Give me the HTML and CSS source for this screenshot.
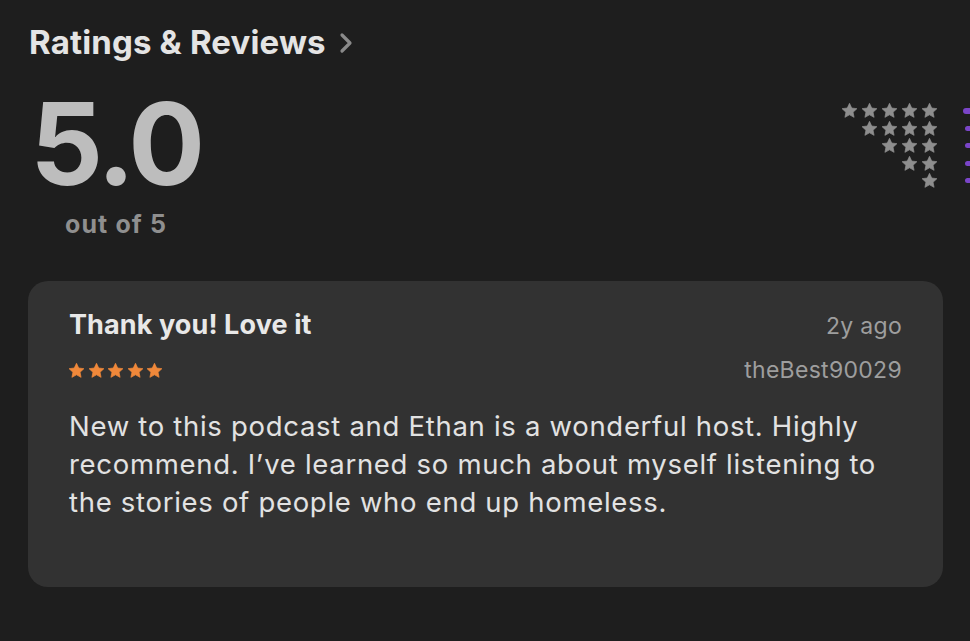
FILE: index.html
```html
<!DOCTYPE html>
<html lang="en">
<head>
  <meta charset="UTF-8" />
  <title>Ratings &amp; Reviews</title>
  <link rel="stylesheet" href="styles.css">
</head>
<body>

  <svg class="defs" width="0" height="0">
    <defs>
      <path id="star" d="M12 1.8 L15.12 8.51 L22.46 9.4 L17.04 14.44 L18.47 21.7 L12 18.1 L5.53 21.7 L6.96 14.44 L1.54 9.4 L8.88 8.51 Z"/>
    </defs>
  </svg>

  <header class="section-head">
    <h1>Ratings &amp; Reviews</h1>
    <svg class="chevron" width="16" height="24" viewBox="0 0 16 24">
      <path d="M4 4 L12 12 L4 20" fill="none" stroke="#8a8a8a" stroke-width="3.2" stroke-linecap="round" stroke-linejoin="round"/>
    </svg>
  </header>

  <!-- summary -->
  <div class="summary">
    <div class="score">
      <div class="score-num">5.0</div>
      <div class="score-sub">out of 5</div>
    </div>

    <div class="histogram">
      <div class="hist-row">
        <span class="stars">
          <svg viewBox="0 0 24 24"><use href="#star"/></svg>
          <svg viewBox="0 0 24 24"><use href="#star"/></svg>
          <svg viewBox="0 0 24 24"><use href="#star"/></svg>
          <svg viewBox="0 0 24 24"><use href="#star"/></svg>
          <svg viewBox="0 0 24 24"><use href="#star"/></svg>
        </span>
        <span class="bar bar-full"></span>
      </div>
      <div class="hist-row">
        <span class="stars">
          <svg viewBox="0 0 24 24"><use href="#star"/></svg>
          <svg viewBox="0 0 24 24"><use href="#star"/></svg>
          <svg viewBox="0 0 24 24"><use href="#star"/></svg>
          <svg viewBox="0 0 24 24"><use href="#star"/></svg>
        </span>
        <span class="bar"></span>
      </div>
      <div class="hist-row">
        <span class="stars">
          <svg viewBox="0 0 24 24"><use href="#star"/></svg>
          <svg viewBox="0 0 24 24"><use href="#star"/></svg>
          <svg viewBox="0 0 24 24"><use href="#star"/></svg>
        </span>
        <span class="bar"></span>
      </div>
      <div class="hist-row">
        <span class="stars">
          <svg viewBox="0 0 24 24"><use href="#star"/></svg>
          <svg viewBox="0 0 24 24"><use href="#star"/></svg>
        </span>
        <span class="bar"></span>
      </div>
      <div class="hist-row">
        <span class="stars">
          <svg viewBox="0 0 24 24"><use href="#star"/></svg>
        </span>
        <span class="bar"></span>
      </div>
    </div>
  </div>

  <!-- review card -->
  <article class="review">
    <div class="review-top">
      <h2>Thank you! Love it</h2>
      <span class="meta">2y ago</span>
    </div>
    <div class="review-sub">
      <span class="rating">
        <svg viewBox="0 0 24 24"><use href="#star"/></svg>
        <svg viewBox="0 0 24 24"><use href="#star"/></svg>
        <svg viewBox="0 0 24 24"><use href="#star"/></svg>
        <svg viewBox="0 0 24 24"><use href="#star"/></svg>
        <svg viewBox="0 0 24 24"><use href="#star"/></svg>
      </span>
      <span class="meta">theBest90029</span>
    </div>
    <p class="review-body">New to this podcast and Ethan is a wonderful host. Highly recommend. I’ve learned so much about myself listening to the stories of people who end up homeless.</p>
  </article>

</body>
</html>
```

FILE: styles.css
```css
body {
  font-family: Inter, "Noto Sans", sans-serif;
  background-color: #1e1e1e;
  margin: 0;
  padding: 22px 0 0 28px;
  overflow: hidden;
  height: 619px;
}

.defs {
  position: absolute;
}

.section-head {
  display: flex;
  align-items: center;
  gap: 12px;
  padding-left: 1px;
}

h1 {
  margin: 0;
  font-size: 33px;
  font-weight: 700;
  color: #e4e4e4;
  letter-spacing: 0.15px;
  line-height: 40px;
}

.chevron {
  margin-top: 2px;
}

.summary {
  display: flex;
  justify-content: space-between;
  align-items: flex-start;
  height: 219px;
}

.score {
  display: flex;
  flex-direction: column;
  align-items: center;
  width: 176px;
}

.score-num {
  font-size: 114px;
  font-weight: 700;
  color: #bdbdbd;
  line-height: 1;
  letter-spacing: -3.5px;
  margin-top: 25px;
}

.score-sub {
  font-size: 25px;
  font-weight: 700;
  color: #8f8f8f;
  letter-spacing: 1.1px;
  margin-top: 8px;
}

.histogram {
  display: flex;
  flex-direction: column;
  margin-top: 40px;
  margin-right: -75px;
}

.hist-row {
  display: flex;
  align-items: center;
  height: 17.5px;
}

.stars {
  display: flex;
  justify-content: flex-end;
  gap: 3px;
  width: 98px;
  fill: #8e8e8e;
  stroke: #8e8e8e;
  stroke-width: 1;
  stroke-linejoin: round;
}

.stars svg {
  width: 17px;
  height: 17px;
  flex: none;
}

.bar {
  width: 80px;
  height: 5px;
  margin-left: 27px;
  border-radius: 3px;
  background-color: #7a45c8;
}

.bar-full {
  height: 6px;
  margin-left: 25px;
}

.review {
  width: 833px;
  height: 268px;
  padding: 27px 41px 11px 41px;
  background-color: #323232;
  border-radius: 20px;
}

.review-top, .review-sub {
  display: flex;
  justify-content: space-between;
  align-items: baseline;
}

h2 {
  margin: 0;
  font-size: 27px;
  font-weight: 700;
  color: #e8e8e8;
  letter-spacing: 0.1px;
}

.meta {
  font-size: 23px;
  color: #9e9e9e;
  letter-spacing: 0.3px;
}

.review-sub {
  align-items: center;
  margin-top: 15px;
}

.rating {
  display: flex;
  gap: 2.5px;
  margin-left: -1px;
  fill: #f0883a;
  stroke: #f0883a;
  stroke-width: 1;
  stroke-linejoin: round;
}

.rating svg {
  width: 17px;
  height: 17px;
  flex: none;
}

.review-body {
  margin: 23px 0 0;
  font-size: 27.5px;
  line-height: 38px;
  letter-spacing: 0.7px;
  color: #e2e2e2;
}
```
